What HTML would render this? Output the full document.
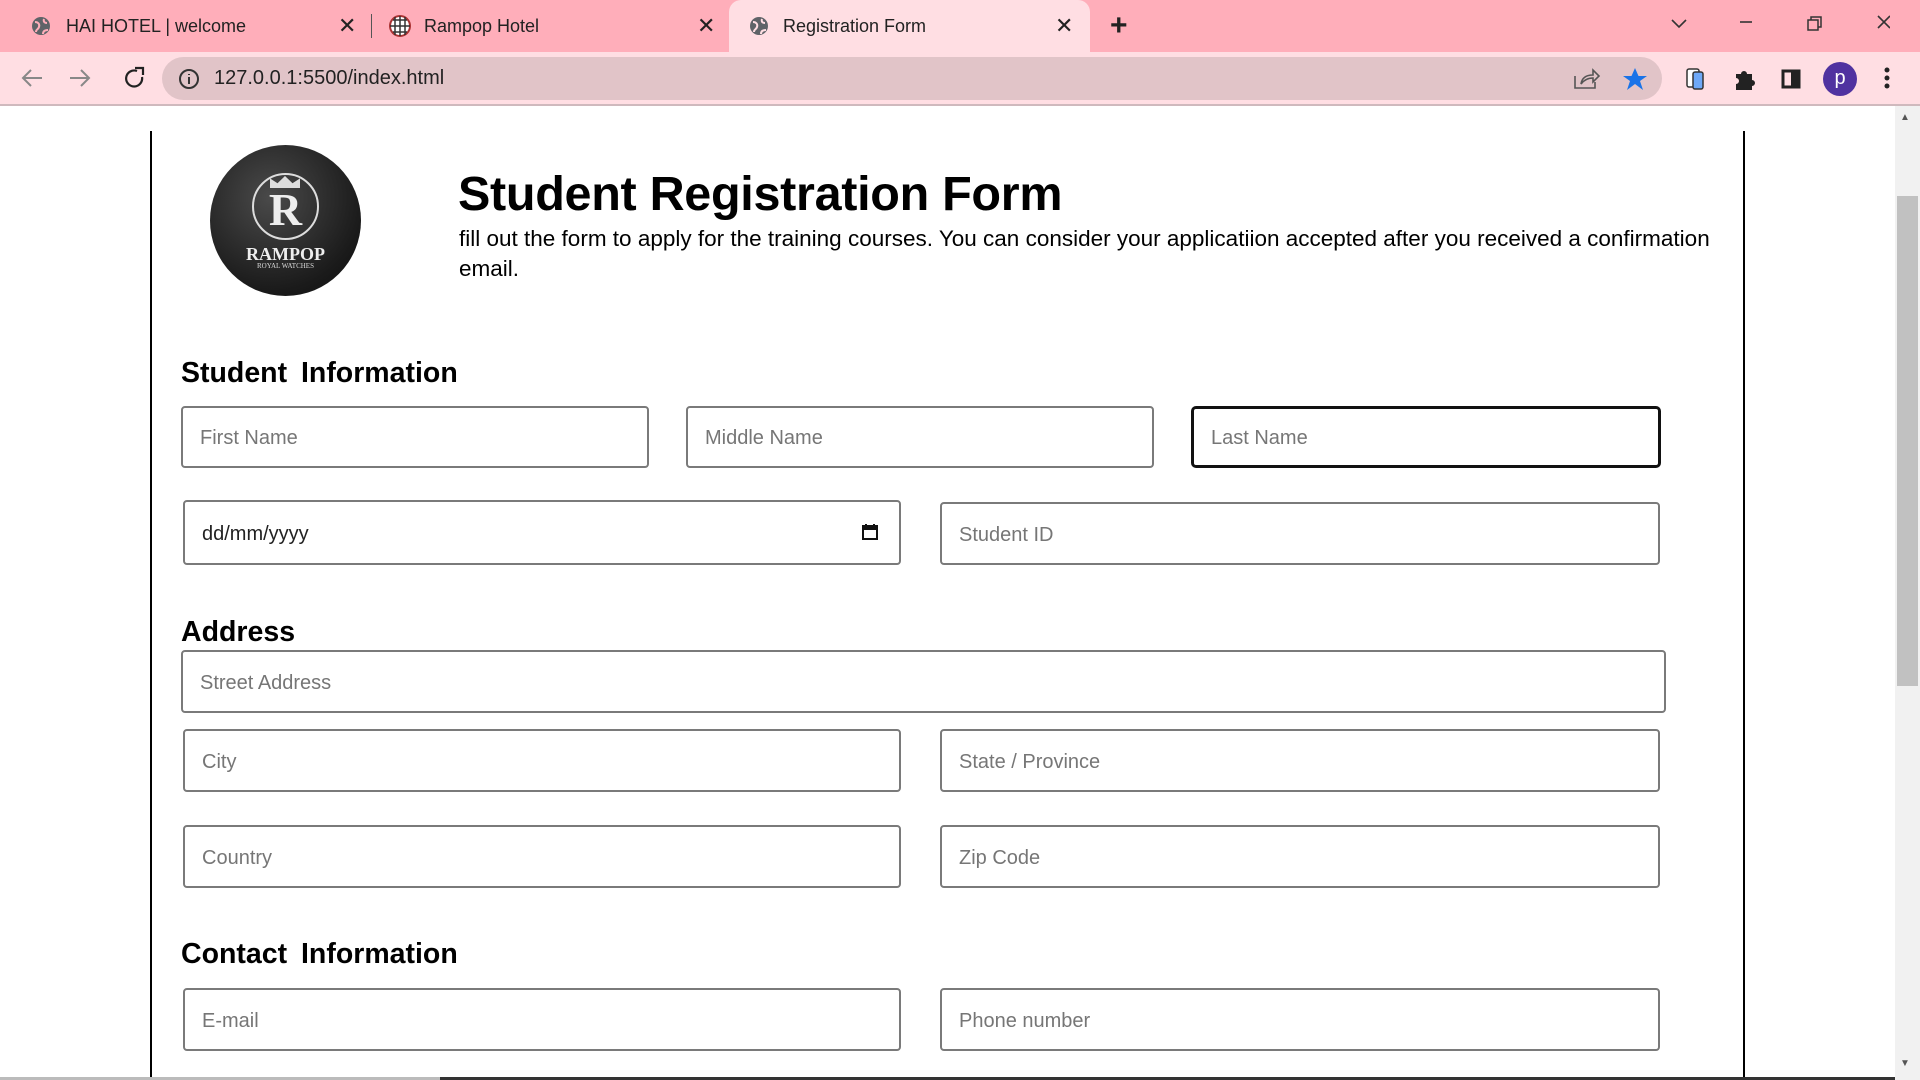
<!DOCTYPE html>
<html><head><meta charset="utf-8"><style>
*{box-sizing:border-box;margin:0;padding:0}
body{width:1920px;height:1080px;position:relative;overflow:hidden;background:#fff;font-family:"Liberation Sans",sans-serif}
.a{position:absolute}
.tabbar{left:0;top:0;width:1920px;height:52px;background:#ffaeba}
.tab{top:0;height:52px;font-size:18px;color:#222;line-height:52px}
.toolbar{left:0;top:52px;width:1920px;height:52px;background:#ffdee3}
.omni{left:162px;top:57px;width:1500px;height:43px;border-radius:22px;background:#e1c4c8}
.in{position:absolute;border:2px solid #7a7a7a;border-radius:4px;background:#fff;font-size:20px;color:#767676;padding-left:17px;padding-top:3px;display:flex;align-items:center}
h2{position:absolute;font-size:28.5px;font-weight:bold;color:#000;word-spacing:6px}
</style></head><body>
<div class="a tabbar"></div>
<div class="a" style="left:729px;top:0;width:361px;height:54px;background:#ffdee3;border-radius:12px 12px 0 0"></div>
<svg class="a" style="left:31px;top:16px" width="20" height="20" viewBox="0 0 20 20"><circle cx="10" cy="10" r="9" fill="#5f6368"/><path d="M4 6c3 0 5 2 4 5s-3 2-3 5M13 3c-1 3 1 4 3 4M12 18c0-3 2-4 5-4" stroke="#ffaeba" stroke-width="2" fill="none"/></svg>
<div class="a tab" style="left:66px">HAI HOTEL | welcome</div>
<div class="a tab" style="left:338px;font-size:22px">✕</div>
<div class="a" style="left:371px;top:14px;width:1px;height:24px;background:#555"></div>
<svg class="a" style="left:389px;top:15px" width="22" height="22" viewBox="0 0 22 22"><circle cx="11" cy="11" r="10" fill="#fff" stroke="#a33" stroke-width="2"/><path d="M1 11h20M11 1v20M4 5h14M4 17h14M6 2v18M16 2v18" stroke="#333" stroke-width="1.5"/></svg>
<div class="a tab" style="left:424px">Rampop Hotel</div>
<div class="a tab" style="left:697px;font-size:22px">✕</div>
<svg class="a" style="left:749px;top:16px" width="20" height="20" viewBox="0 0 20 20"><circle cx="10" cy="10" r="9" fill="#5f6368"/><path d="M4 6c3 0 5 2 4 5s-3 2-3 5M13 3c-1 3 1 4 3 4M12 18c0-3 2-4 5-4" stroke="#ffdee3" stroke-width="2" fill="none"/></svg>
<div class="a tab" style="left:783px">Registration Form</div>
<div class="a tab" style="left:1055px;font-size:22px">✕</div>
<div class="a tab" style="left:1110px;font-size:30px;font-weight:bold">+</div>
<svg class="a" style="left:1670px;top:14px" width="220" height="20" viewBox="0 0 220 20"><path d="M2 6l7 7 7-7" stroke="#333" stroke-width="1.6" fill="none"/><path d="M70 8h12" stroke="#333" stroke-width="1.6"/><rect x="138" y="6" width="10" height="10" fill="none" stroke="#333" stroke-width="1.5"/><path d="M141 6V3h10v10h-3" fill="none" stroke="#333" stroke-width="1.5"/><path d="M208 2l12 12M220 2l-12 12" stroke="#333" stroke-width="1.6"/></svg>
<div class="a toolbar"></div>
<div class="a" style="left:0;top:104px;width:1920px;height:2px;background:#cfb9bd"></div>
<svg class="a" style="left:20px;top:66px" width="130" height="24" viewBox="0 0 130 24"><path d="M22 12H4M11 4l-8 8 8 8" stroke="#888" stroke-width="2" fill="none"/><path d="M50 12h18M61 4l8 8-8 8" stroke="#888" stroke-width="2" fill="none"/><path d="M117 5a8 8 0 1 0 5 6" stroke="#222" stroke-width="2.2" fill="none"/><path d="M115 2h8v7" fill="none" stroke="#222" stroke-width="2.2"/></svg>
<div class="a omni"></div>
<svg class="a" style="left:178px;top:68px" width="22" height="22" viewBox="0 0 22 22"><circle cx="11" cy="11" r="9" fill="none" stroke="#333" stroke-width="2"/><path d="M11 9v7M11 6v1" stroke="#333" stroke-width="2"/></svg>
<div class="a" style="left:214px;top:67px;font-size:20px;color:#222">127.0.0.1:5500/index.html</div>
<svg class="a" style="left:1573px;top:66px" width="270" height="26" viewBox="0 0 270 26"><path d="M2 10v12h20V16M8 18c1-7 6-9 12-9V4l6 6-6 6v-4c-5 0-9 2-12 6z" fill="none" stroke="#555" stroke-width="1.6"/><path d="M62 2l3.5 8h8.5l-7 5 3 9-8-6-8 6 3-9-7-5h8.5z" fill="#1a73e8"/><rect x="114" y="3" width="12" height="18" rx="2" fill="#fff" stroke="#333" stroke-width="1.5"/><rect x="120" y="6" width="10" height="17" rx="2" fill="#6ea8f7" stroke="#333" stroke-width="1.5"/><path d="M163 8h5a3 3 0 1 1 6 0h5v6a3 3 0 1 1 0 6v4h-16v-6a3 3 0 1 0 0-6z" fill="#222"/><rect x="210" y="5" width="16" height="16" fill="none" stroke="#222" stroke-width="3"/><rect x="218" y="5" width="8" height="16" fill="#222"/></svg>
<div class="a" style="left:1823px;top:62px;width:34px;height:34px;border-radius:50%;background:#5032a0;color:#fff;font-size:20px;text-align:center;line-height:32px">p</div>
<svg class="a" style="left:1882px;top:66px" width="10" height="26"><circle cx="5" cy="4" r="2.5" fill="#222"/><circle cx="5" cy="12" r="2.5" fill="#222"/><circle cx="5" cy="20" r="2.5" fill="#222"/></svg>

<div class="a" style="left:1895px;top:106px;width:25px;height:974px;background:#f1f1f1"></div>
<div class="a" style="left:1897px;top:196px;width:21px;height:490px;background:#c1c1c1"></div>
<div class="a" style="left:1900px;top:112px;font-size:10px;color:#555">▲</div>
<div class="a" style="left:1900px;top:1058px;font-size:10px;color:#555">▼</div>

<div class="a" style="left:150px;top:131px;width:2px;height:949px;background:#000"></div>
<div class="a" style="left:1743px;top:131px;width:2px;height:949px;background:#000"></div>
<div class="a" style="left:0;top:1077px;width:1895px;height:3px;background:#333"></div>
<div class="a" style="left:0;top:1077px;width:440px;height:3px;background:#bbb"></div>

<div class="a" style="left:210px;top:145px;width:151px;height:151px;border-radius:50%;background:radial-gradient(circle at 40% 35%,#4a4a4a,#1a1a1a 70%,#0d0d0d)"></div>
<div class="a" style="left:252px;top:173px;width:67px;height:67px;border-radius:50%;border:2px solid #ddd"></div>
<div class="a" style="left:252px;top:183px;width:67px;text-align:center;font:bold 46px 'Liberation Serif',serif;color:#eee">R</div>
<div class="a" style="left:270px;top:176px;width:30px;height:12px;background:#ddd;clip-path:polygon(0 100%,0 20%,25% 60%,50% 0,75% 60%,100% 20%,100% 100%)"></div>
<div class="a" style="left:210px;top:244px;width:151px;text-align:center;font:bold 18px 'Liberation Serif',serif;color:#eee">RAMPOP</div>
<div class="a" style="left:210px;top:262px;width:151px;text-align:center;font:7px 'Liberation Serif',serif;color:#ddd">ROYAL WATCHES</div>

<div class="a" style="left:458px;top:166px;font-size:48.5px;font-weight:bold;color:#000;letter-spacing:-0.3px">Student Registration Form</div>
<div class="a" style="left:459px;top:224px;width:1275px;font-size:22.5px;line-height:30px;color:#000">fill out the form to apply for the training courses. You can consider your applicatiion accepted after you received a confirmation email.</div>

<h2 style="left:181px;top:357px">Student Information</h2>
<div class="in" style="left:181px;top:406px;width:468px;height:62px">First Name</div>
<div class="in" style="left:686px;top:406px;width:468px;height:62px">Middle Name</div>
<div class="in" style="left:1191px;top:406px;width:470px;height:62px;border:3px solid #111;border-radius:5px">Last Name</div>
<div class="in" style="left:183px;top:500px;width:718px;height:65px;color:#222">dd/mm/yyyy</div>
<svg class="a" style="left:861px;top:523px" width="18" height="18" viewBox="0 0 18 18"><rect x="2" y="3" width="14" height="13" fill="none" stroke="#111" stroke-width="2"/><rect x="2" y="3" width="14" height="4" fill="#111"/><path d="M5 1v3M13 1v3" stroke="#111" stroke-width="2"/></svg>
<div class="in" style="left:940px;top:502px;width:720px;height:63px">Student ID</div>

<h2 style="left:181px;top:616px">Address</h2>
<div class="in" style="left:181px;top:650px;width:1485px;height:63px">Street Address</div>
<div class="in" style="left:183px;top:729px;width:718px;height:63px">City</div>
<div class="in" style="left:940px;top:729px;width:720px;height:63px">State / Province</div>
<div class="in" style="left:183px;top:825px;width:718px;height:63px">Country</div>
<div class="in" style="left:940px;top:825px;width:720px;height:63px">Zip Code</div>

<h2 style="left:181px;top:938px">Contact Information</h2>
<div class="in" style="left:183px;top:988px;width:718px;height:63px">E-mail</div>
<div class="in" style="left:940px;top:988px;width:720px;height:63px">Phone number</div>
</body></html>
